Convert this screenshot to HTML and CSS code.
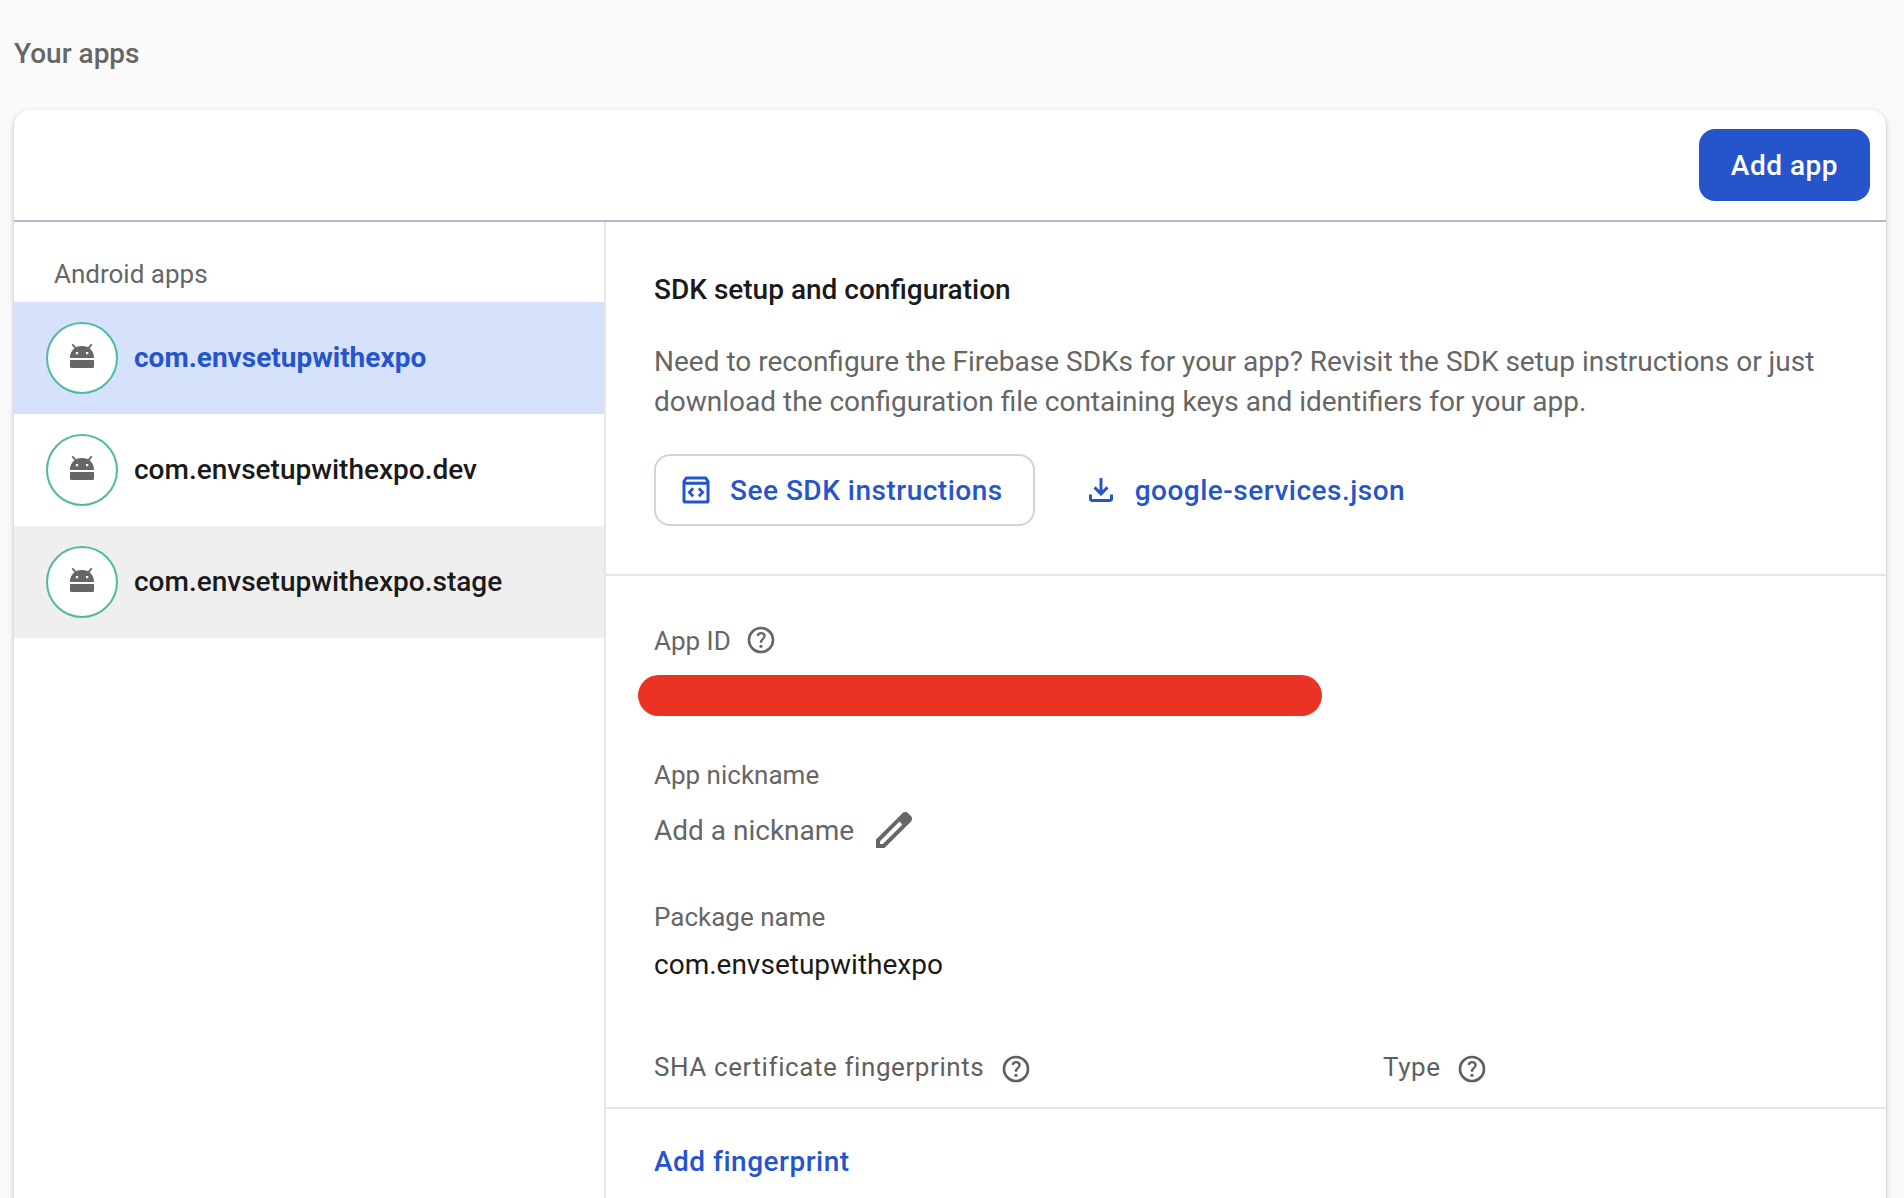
FILE: index.html
```html
<!DOCTYPE html>
<html lang="en">
<head>
<meta charset="utf-8">
<title>Your apps</title>
<link rel="stylesheet" href="styles.css">
</head>
<body>
<svg class="sprite" aria-hidden="true">
  <symbol id="icon-android" viewBox="0 0 36 36">
    <path d="M8.300 4.400 11.600 8.200M27.700 4.400 24.400 8.200" fill="none" stroke="currentColor" stroke-width="1.800"/>
    <path fill-rule="evenodd" d="M6 18C6 10.500 11 6 18 6S30 10.500 30 18ZM11.800 12v2.200h2.300v-2.200ZM22 12v2.200h2.300v-2.200Z"/>
    <path d="M6 20h24v6.500a1.500 1.500 0 0 1-1.500 1.500h-21A1.500 1.500 0 0 1 6 26.500Z"/>
  </symbol>
  <symbol id="icon-help" viewBox="0 -960 960 960">
    <path d="M478-240q21 0 35.500-14.500T528-290q0-21-14.500-35.500T478-340q-21 0-35.500 14.500T428-290q0 21 14.500 35.500T478-240Zm-36-154h74q0-33 7.500-52t42.500-52q26-26 41-49.500t15-56.500q0-56-41-86t-97-30q-57 0-92.500 30T342-618l66 26q5-18 22.500-39t53.500-21q32 0 48 17.500t16 38.500q0 20-12 37.500T506-526q-44 39-54 59t-10 73Z"/>
    <circle cx="480" cy="-480" r="360" fill="none" stroke="currentColor" stroke-width="80"/>
  </symbol>
  <symbol id="icon-edit" viewBox="0 -960 960 960">
    <path d="M200-200h57l391-391-57-57-391 391v57Zm-80 80v-170l528-527q12-11 26.500-17t30.500-6q16 0 31 6t26 18l55 56q12 11 17.500 26t5.500 30q0 16-5.500 30.500T817-647L290-120H120Z"/>
  </symbol>
  <symbol id="icon-download" viewBox="0 -960 960 960">
    <path d="M480-320 280-520l56-58 104 104v-326h80v326l104-104 56 58-200 200ZM240-160q-33 0-56.500-23.500T160-240v-120h80v120h480v-120h80v120q0 33-23.500 56.500T720-160H240Z"/>
  </symbol>
  <symbol id="icon-sdk" viewBox="0 0 36 36">
    <g fill="none" stroke="currentColor">
      <path stroke-width="3" stroke-linejoin="round" d="M6 9.500 8.200 6H27.800L30 9.500V29a1 1 0 0 1-1 1H7a1 1 0 0 1-1-1ZM6 11.200H30"/>
      <path stroke-width="2.800" d="M15.200 16.300 11.300 20.300 15.200 24.300M20.800 16.300 24.700 20.300 20.800 24.300"/>
    </g>
  </symbol>
</svg>

<h2 class="page-title">Your apps</h2>

<section class="card">
  <header class="card-header">
    <button class="btn btn-primary"><span class="btn-label">Add app</span></button>
  </header>
  <div class="card-body">
    <nav class="sidebar">
      <h3 class="sidebar-title">Android apps</h3>
      <a class="app-item selected"><span class="avatar"><svg class="icon-36"><use href="#icon-android"/></svg></span>com.envsetupwithexpo</a>
      <a class="app-item"><span class="avatar"><svg class="icon-36"><use href="#icon-android"/></svg></span>com.envsetupwithexpo.dev</a>
      <a class="app-item hovered"><span class="avatar"><svg class="icon-36"><use href="#icon-android"/></svg></span>com.envsetupwithexpo.stage</a>
    </nav>

    <main class="details">
      <section class="setup">
        <h3 class="setup-title">SDK setup and configuration</h3>
        <p class="setup-text">Need to reconfigure the Firebase SDKs for your app? Revisit the SDK setup instructions or just download the configuration file containing keys and identifiers for your app.</p>
        <div class="setup-actions">
          <button class="btn btn-outlined"><svg class="icon-36"><use href="#icon-sdk"/></svg><span class="btn-label">See SDK instructions</span></button>
          <button class="btn btn-text"><svg class="icon-36"><use href="#icon-download"/></svg><span class="btn-label">google-services.json</span></button>
        </div>
      </section>

      <section class="fields">
        <div class="label app-id">App ID<svg class="icon-help"><use href="#icon-help"/></svg></div>
        <div class="redacted"></div>
        <div class="label">App nickname</div>
        <div class="nickname">Add a nickname<svg class="icon-edit"><use href="#icon-edit"/></svg></div>
        <div class="label">Package name</div>
        <div class="package">com.envsetupwithexpo</div>
      </section>

      <section class="fingerprints">
        <div class="fingerprints-head">
          <div class="label">SHA certificate fingerprints<svg class="icon-help"><use href="#icon-help"/></svg></div>
          <div class="label">Type<svg class="icon-help"><use href="#icon-help"/></svg></div>
        </div>
        <button class="btn btn-link"><span class="btn-label">Add fingerprint</span></button>
      </section>
    </main>
  </div>
</section>
</body>
</html>
```
FILE: styles.css
```css
* {
  box-sizing: border-box;
}

body {
  display: flex;
  flex-direction: column;
  height: 1198px;
  margin: 0;
  padding: 34px 18px 0 14px;
  overflow: hidden;
  background: #fafafa;
  color: #666;
  font: 400 28px/40px Roboto, sans-serif;
}

h2,
h3,
p {
  margin: 0;
  font-size: inherit;
}

.sprite {
  position: absolute;
  width: 0;
  height: 0;
}

svg {
  flex: none;
  fill: currentColor;
}

.icon-36 {
  width: 36px;
  height: 36px;
}

.icon-help {
  width: 32px;
  height: 32px;
}

.icon-edit {
  width: 48px;
  height: 48px;
}

.page-title {
  margin-bottom: 36px;
  font-weight: 500;
}

.card {
  display: flex;
  flex: 0 0 1140px;
  flex-direction: column;
  background: #fff;
  border-radius: 16px;
  box-shadow: 0 4px 2px -2px rgba(0, 0, 0, .2), 0 2px 2px rgba(0, 0, 0, .14), 0 2px 6px rgba(0, 0, 0, .2);
}

.card-header {
  display: flex;
  align-items: center;
  justify-content: flex-end;
  height: 112px;
  padding: 0 16px;
  border-bottom: 2px solid #b5b8c9;
}

.btn {
  display: flex;
  align-items: center;
  gap: 16px;
  height: 72px;
  padding: 0 32px;
  border: 0;
  border-radius: 16px;
  background: none;
  color: #2655cb;
  font: 500 28px/40px Roboto, sans-serif;
  letter-spacing: .5px;
}

.btn-label {
  padding-top: 2px;
}

.btn-primary {
  background: #2655cb;
  color: #fff;
}

.btn-outlined {
  padding: 0 30px 0 22px;
  border: 2px solid #d0d3df;
}

.btn-text {
  padding: 0 32px;
}

.btn-link {
  padding: 0;
}

.card-body {
  display: flex;
  flex: 1;
}

.sidebar {
  width: 592px;
  border-right: 2px solid #e5e6ec;
}

.sidebar-title {
  padding: 32px 40px 8px;
  font-size: 26px;
  font-weight: 400;
}

.app-item {
  display: flex;
  align-items: center;
  gap: 16px;
  height: 112px;
  padding-left: 32px;
  color: #1a1a1a;
  font-weight: 500;
}

.app-item.selected {
  background: #d6e1fc;
  color: #2655cb;
  font-weight: 700;
}

.app-item.hovered {
  background: #efefef;
}

.avatar {
  display: flex;
  align-items: center;
  justify-content: center;
  width: 72px;
  height: 72px;
  border: 2px solid #4fbaa1;
  border-radius: 50%;
  background: #fff;
  color: #666;
}

.details {
  flex: 1;
}

.setup {
  display: flex;
  flex-direction: column;
  gap: 32px;
  padding: 48px;
  border-bottom: 2px solid #e5e6ec;
}

.setup-title {
  color: #1a1a1a;
  font-weight: 500;
}

.setup-actions {
  display: flex;
  gap: 16px;
}

.fields {
  padding: 45px 48px 62px;
}

.label {
  display: flex;
  align-items: center;
  gap: 16px;
  height: 40px;
  font-size: 26px;
}

.app-id {
  gap: 14px;
}

.app-id .icon-help {
  margin-bottom: 2px;
}

.redacted {
  width: 684px;
  height: 41px;
  margin: 13.500px 0 39.500px -16px;
  border-radius: 21px;
  background: #ea3323;
}

.nickname {
  display: flex;
  align-items: center;
  gap: 16px;
  height: 40px;
  margin: 16px 0 46px;
}

.nickname .icon-edit {
  margin-bottom: 2px;
}

.package {
  margin-top: 8px;
  color: #1a1a1a;
}

.fingerprints-head {
  display: grid;
  grid-template-columns: 729px 1fr;
  padding: 0 48px 20px;
  border-bottom: 2px solid #e5e6ec;
  color: #5f5f5f;
  letter-spacing: .580px;
}

.fingerprints-head .label {
  gap: 15.500px;
}

.fingerprints-head .icon-help {
  margin-top: 3px;
}

.fingerprints .btn-link {
  margin: 16px 48px;
}
```
